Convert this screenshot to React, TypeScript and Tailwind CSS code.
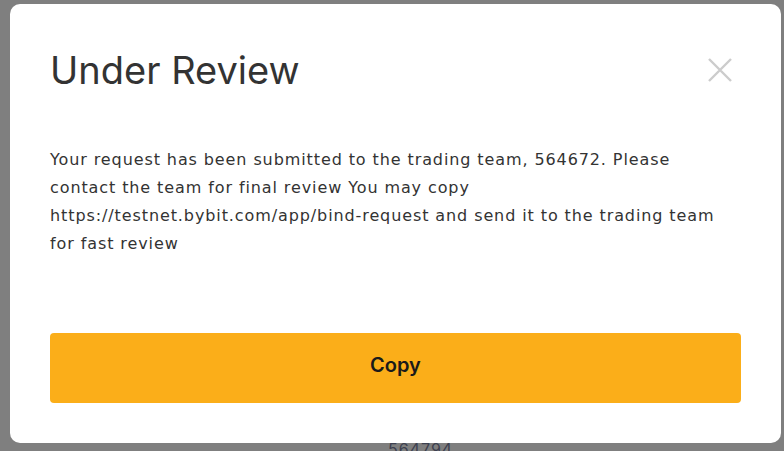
import React from "react";

const App: React.FC = () => {
  return (
    <div
      className="h-[451px] w-[784px] overflow-hidden bg-[#7f7f7f] pt-[4px] pl-[10px]"
      style={{ fontFamily: "Inter, 'Noto Sans', sans-serif" }}
    >
      <div className="flex h-[439px] w-[771px] flex-col rounded-[10px] bg-white px-10 pt-[44px] pb-10">
        <div className="flex items-center justify-between">
          <h1 className="text-[38px] leading-[44px] font-normal text-[#333333]">Under Review</h1>
          <button className="mr-[8px] text-[#cccccc]">
            <svg width="26" height="26" viewBox="0 0 26 26" fill="none" stroke="currentColor" strokeWidth="2.4">
              <path d="M2 2 L24 24 M24 2 L2 24" />
            </svg>
          </button>
        </div>
        <p
          className="mt-[54px] w-full whitespace-nowrap text-[16px] leading-[28px] tracking-[0.9px] text-[#333333]"
          style={{ fontFamily: "'DejaVu Sans', sans-serif" }}
        >
          Your request has been submitted to the trading team, 564672. Please
          <br />
          contact the team for final review You may copy
          <br />
          https://testnet.bybit.com/app/bind-request and send it to the trading team
          <br />
          for fast review
        </p>
        <div className="flex-1" />
        <button className="h-[70px] w-full rounded-[4px] bg-[#fbae19] pb-[6px] text-[20px] font-semibold text-[#1a1a1a]">
          Copy
        </button>
      </div>
      <div className="-mt-[2px] pl-[378px] text-[16px] leading-[16px] tracking-[1px] text-[#3d4150]">564794</div>
    </div>
  );
};

export default App;
